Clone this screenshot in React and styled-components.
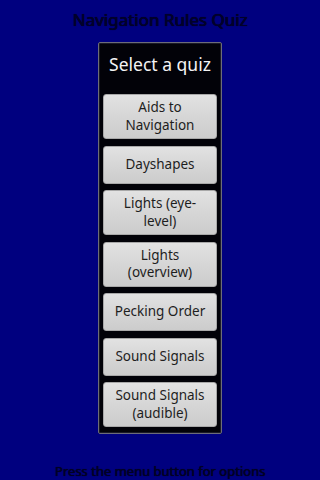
import React from 'react'
import styled, { createGlobalStyle } from 'styled-components'

const quizzes = [
  'Aids to Navigation',
  'Dayshapes',
  'Lights (eye-level)',
  'Lights (overview)',
  'Pecking Order',
  'Sound Signals',
  'Sound Signals (audible)',
]

export default function App() {
  return (
    <>
      <GlobalStyle />
      <Screen>
        <Title>Navigation Rules Quiz</Title>
        <Dialog>
          <DialogHeader>Select a quiz</DialogHeader>
          <QuizList>
            {quizzes.map(q => (
              <QuizButton key={q}>{q}</QuizButton>
            ))}
          </QuizList>
        </Dialog>
        <Footer>Press the menu button for options</Footer>
      </Screen>
    </>
  )
}

// Styles
const GlobalStyle = createGlobalStyle`
  html, body {
    margin: 0;
    padding: 0;
    background: #000080;
  }
  body {
    font-family: "Noto Sans", "Open Sans", "DejaVu Sans", sans-serif;
  }
`

const Screen = styled.div`
  width: 320px;
  height: 480px;
  display: flex;
  flex-direction: column;
  align-items: center;
  background: #00007f;
  overflow: hidden;
`

const Title = styled.div`
  height: 40px;
  line-height: 40px;
  margin-bottom: 2px;
  font-size: 17px;
  font-weight: 400;
  color: #00002a;
  text-shadow: 0 0 1px #000030, 0.6px 0 0 #00002a, 0 0.4px 0 #00002a;
`

const Dialog = styled.div`
  width: 114px;
  padding: 0 4px 6px;
  border: 1px solid #6c6c78;
  border-radius: 2px;
  background: #020208;
  box-shadow: inset 0 0 0 1px #1a1a26;
`

const DialogHeader = styled.div`
  height: 51px;
  display: flex;
  align-items: center;
  justify-content: center;
  padding-bottom: 9px;
  box-sizing: border-box;
  font-size: 17.5px;
  color: #f4f4f4;
`

const QuizList = styled.div`
  display: flex;
  flex-direction: column;
  gap: 6.5px;
`

const QuizButton = styled.button`
  min-height: 38px;
  width: 100%;
  padding: 4px 6px;
  display: flex;
  align-items: center;
  justify-content: center;
  border: 1px solid #a8a8a8;
  border-radius: 3px;
  background: linear-gradient(#e2e2e2, #d6d6d6 50%, #cccccc);
  font-family: "Noto Sans", "Open Sans", sans-serif;
  font-size: 13.5px;
  line-height: 17.5px;
  color: #1e1e1e;
  text-align: center;
  box-sizing: border-box;
`

const Footer = styled.div`
  margin-top: auto;
  height: 18px;
  line-height: 18px;
  font-size: 13px;
  font-weight: 400;
  color: #000024;
  text-shadow: 0 0 1px #000030, 0.5px 0 0 #000024;
`
